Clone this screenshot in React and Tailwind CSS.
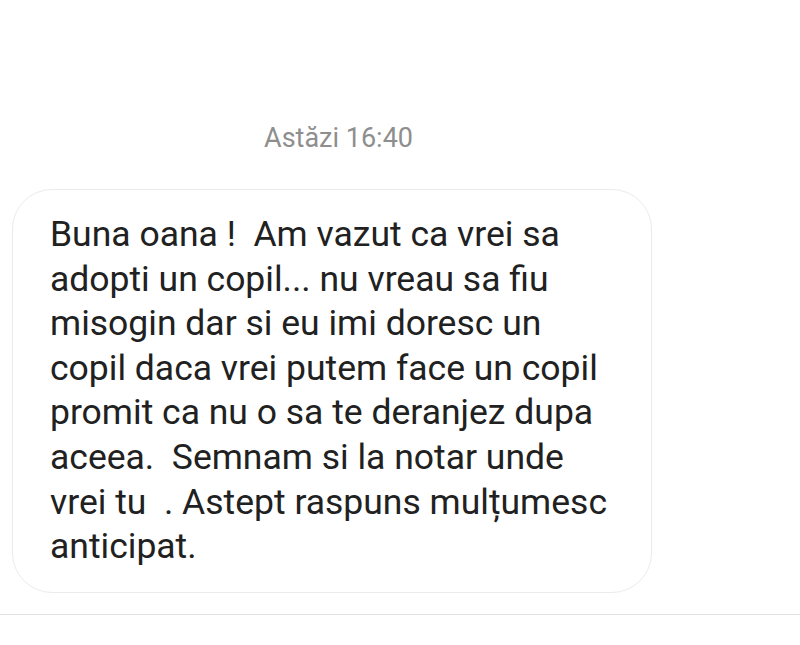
import React from 'react';

const lines = [
  'Buna oana !  Am vazut ca vrei sa',
  'adopti un copil... nu vreau sa fiu',
  'misogin dar si eu imi doresc un',
  'copil daca vrei putem face un copil',
  'promit ca nu o sa te deranjez dupa',
  'aceea.  Semnam si la notar unde',
  'vrei tu  . Astept raspuns mulțumesc',
  'anticipat.',
];

export default function App() {
  return (
    <div className="h-[645px] w-full overflow-hidden bg-white pt-[122px] font-['Roboto',sans-serif]">
      <div className="w-[677px] text-center text-[27px] leading-[32px] text-[#8e8e8e]">Astăzi 16:40</div>

      <div className="ml-[12px] mt-[35px] w-[640px] rounded-[40px] border border-[#ebebeb] pb-[23px] pl-[37px] pt-[22px]">
        {lines.map((line) => (
          <div key={line} className="whitespace-pre text-[35.5px] leading-[44.6px] text-[#212121]">
            {line}
          </div>
        ))}
      </div>

      <div className="mt-[21px] h-px w-full bg-[#e0e0e0]" />
    </div>
  );
}
